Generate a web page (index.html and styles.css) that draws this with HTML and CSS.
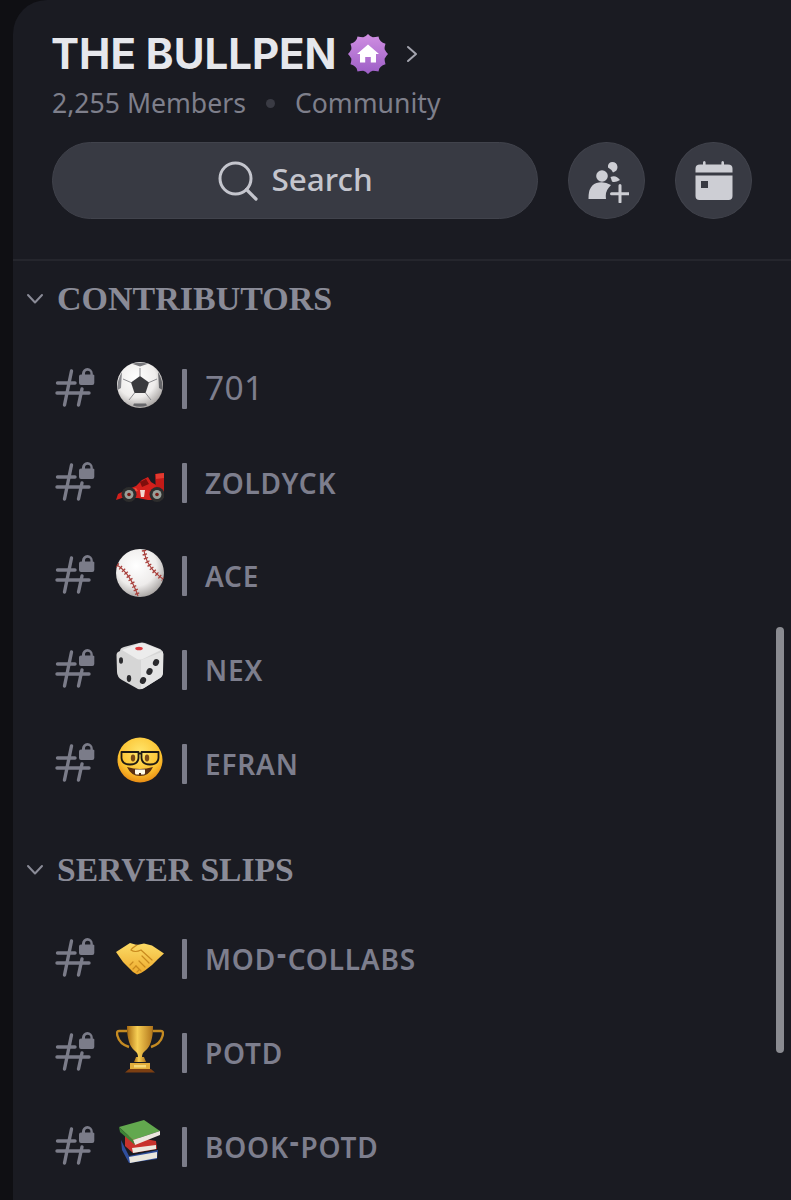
FILE: index.html
```html
<!DOCTYPE html>
<html lang="en">
<head>
    <meta charset="UTF-8">
    <title>The Bullpen</title>
    <meta name="viewport" content="width=device-width, initial-scale=1.0">
    <link rel="stylesheet" href="styles.css">
</head>
<body>
    <svg class="defs" width="0" height="0">
        <defs>
            <radialGradient id="ballGrad" cx="42%" cy="35%" r="70%">
                <stop offset="0" stop-color="#ffffff"/>
                <stop offset="0.6" stop-color="#eeeceb"/>
                <stop offset="1" stop-color="#a09c9a"/>
            </radialGradient>
            <radialGradient id="faceGrad" cx="50%" cy="32%" r="72%">
                <stop offset="0" stop-color="#ffe56c"/>
                <stop offset="0.65" stop-color="#fcc22f"/>
                <stop offset="1" stop-color="#e4820f"/>
            </radialGradient>
            <linearGradient id="goldGrad" x1="0" x2="1" y1="0" y2="0">
                <stop offset="0" stop-color="#a86a10"/>
                <stop offset="0.4" stop-color="#f7cf55"/>
                <stop offset="1" stop-color="#b0741a"/>
            </linearGradient>
            <linearGradient id="handGrad" x1="0" x2="0" y1="0" y2="1">
                <stop offset="0" stop-color="#fcdb66"/>
                <stop offset="1" stop-color="#eeaa2c"/>
            </linearGradient>
            <linearGradient id="badgeGrad" x1="0" x2="0" y1="0" y2="1">
                <stop offset="0" stop-color="#d08fe2"/>
                <stop offset="1" stop-color="#9c5ec6"/>
            </linearGradient>

            <symbol id="hashLock" viewBox="0 0 40 40">
                <g fill="none" stroke="#7b7c89" stroke-width="3.4" stroke-linecap="round">
                    <path d="M16.500 3 L9.500 37"/>
                    <path d="M27 21 L23.500 37"/>
                    <path d="M2.500 15 H20"/>
                    <path d="M2 25 H34"/>
                </g>
                <path d="M24 8.500 a2 2 0 0 1 2-2 h1 v-1 a5.400 5.400 0 0 1 10.800 0 v1 h0 a1.500 1.500 0 0 1 1.500 2 v6.500 a2 2 0 0 1-2 2 H26 a2 2 0 0 1-2-2 z M30 6.500 h5.400 v-1 a2.700 2.700 0 0 0-5.400 0 z" fill="#7b7c89" fill-rule="evenodd"/>
            </symbol>

            <symbol id="soccer" viewBox="0 0 48 48">
                <circle cx="24" cy="24" r="23" fill="url(#ballGrad)"/>
                <path d="M24 15 L33 21.500 L29.500 32 H18.500 L15 21.500 Z" fill="#3a3a3e"/>
                <g stroke="#8a8a8e" stroke-width="1">
                    <path d="M24 15 V7 M33 21.500 L41 18 M15 21.500 L7 18 M29.500 32 L35 39 M18.500 32 L13 39"/>
                </g>
                <path d="M16 2.800 Q24 0.500 32 2.800 L24 5.500 Z" fill="#77777b"/>
                <path d="M42 11 Q47 19 46.500 29 L43 27 L42.500 18 Z" fill="#66666a"/>
                <path d="M6 11 Q1 19 1.500 29 L5 27 L5.500 18 Z" fill="#85858a"/>
                <path d="M17 44.500 Q24 47 31 44.500 L30 42.500 H18 Z" fill="#66666a"/>
            </symbol>

            <symbol id="racecar" viewBox="0 0 48 48">
                <path d="M0 45 L2 39 L10 35 L20 31 L26 25 L32 22 L35 27 L40 30 V45 H32 L22 43 H6 Z" fill="#d3201c"/>
                <path d="M39 19 L48 18 V37 L40 36 Z" fill="#c21a17"/>
                <path d="M40 19 L48 18 V23 L40 24 Z" fill="#e23a30"/>
                <path d="M24 27 L30 24 L33 29 L26 32 Z" fill="#7f0e0c"/>
                <path d="M8 36 L20 33 L22 36 L10 39 Z" fill="#f04a3a"/>
                <path d="M24 35 h5 l-1 7 h-3 z" fill="#f2d8d0"/>
                <circle cx="13" cy="39.500" r="7.500" fill="#2d2d2d"/>
                <circle cx="13" cy="39.500" r="4.500" fill="#98a09a"/>
                <circle cx="13" cy="39.500" r="1.800" fill="#7a1a14"/>
                <circle cx="41" cy="39.500" r="7.500" fill="#2d2d2d"/>
                <circle cx="41" cy="39.500" r="4.500" fill="#98a09a"/>
                <circle cx="41" cy="39.500" r="1.800" fill="#7a1a14"/>
            </symbol>

            <symbol id="baseball" viewBox="0 0 48 48">
                <circle cx="24" cy="24" r="24" fill="url(#ballGrad)"/>
                <g fill="none" stroke="#a9403c">
                    <path d="M1 16 Q14 24 22 47" stroke-width="1.200"/>
                    <path d="M28 1 Q30 18 47 30" stroke-width="1.200"/>
                    <path d="M1 16 Q14 24 22 47" stroke-width="4.500" stroke-dasharray="1.300 2.600"/>
                    <path d="M28 1 Q30 18 47 30" stroke-width="4.500" stroke-dasharray="1.300 2.600"/>
                </g>
            </symbol>

            <symbol id="die" viewBox="0 0 48 48">
                <path d="M4 9 Q4 6 8 5 L23 1 Q26 0 29 1 L44 7 Q47 8.500 47.500 12 L47 30 Q47 34 44 36 L28 46 Q25 48 22 47 L6 38 Q1 35 1 30 L0.500 13 Q0.500 10 4 9 Z" fill="#d6d6d6"/>
                <path d="M6 8 L23 1.500 Q26 0.500 28 1.500 L45 8 L27 17 Q24 18 21 17 Z" fill="#ececec"/>
                <path d="M25 18 L47 9.500 L47 30 Q47 34 44 36 L28 46 Q25.500 47.500 25 46 Z" fill="#e4e4e4"/>
                <ellipse cx="23" cy="6.500" rx="3.800" ry="1.800" fill="#de3b3f"/>
                <ellipse cx="5" cy="18.500" rx="2" ry="3.200" fill="#2b2b2e"/>
                <ellipse cx="13" cy="36.500" rx="2.200" ry="3.400" fill="#2b2b2e"/>
                <ellipse cx="40" cy="20.500" rx="3" ry="3.600" fill="#2b2b2e" transform="rotate(25 40 20.500)"/>
                <ellipse cx="33.500" cy="29.500" rx="3" ry="3.600" fill="#2b2b2e" transform="rotate(25 33.500 29.500)"/>
                <ellipse cx="27" cy="38.500" rx="3" ry="3.600" fill="#2b2b2e" transform="rotate(25 27 38.500)"/>
            </symbol>

            <symbol id="nerd" viewBox="0 0 48 48">
                <circle cx="24" cy="24" r="22.500" fill="url(#faceGrad)"/>
                <ellipse cx="17" cy="22" rx="2.200" ry="3.400" fill="#7a4a16"/>
                <ellipse cx="31" cy="22" rx="2.200" ry="3.400" fill="#7a4a16"/>
                <g fill="none" stroke="#1e1a14" stroke-width="1.800">
                    <path d="M5.500 16 H22.500 V22 Q22 28.500 14 28.500 Q6 28.500 5.500 22 Z" stroke-linejoin="round"/>
                    <path d="M25.500 16 H42.500 V22 Q42 28.500 34 28.500 Q26 28.500 25.500 22 Z" stroke-linejoin="round"/>
                    <path d="M22.500 17.500 H25.500"/>
                </g>
                <path d="M11 31 Q24 35 37 31 Q33 40 24 40 Q15 40 11 31 Z" fill="#5a2f10"/>
                <path d="M19 33.500 H29 V37 q0 1.500-1.500 1.500 H25 V37 h-2 v1.500 h-2.500 q-1.500 0-1.500-1.500 z" fill="#fffbe8"/>
            </symbol>

            <symbol id="handshake" viewBox="0 0 48 48">
                <path d="M0 20 L14 11 L21 13 L28 11.500 L36 13.500 L48 21.500 L42 27 L36 33 L29 38.500 L25 41 L21 42.500 L17 40 L14 37 L7 30 Z" fill="url(#handGrad)"/>
                <g fill="none" stroke="#c98a1e" stroke-width="1.200" stroke-linecap="round">
                    <path d="M21 13 Q16 16 15 18 Q19 21 25 18 L36 28"/>
                    <path d="M33 31 L26 24"/>
                    <path d="M29 35 L23 29"/>
                    <path d="M25 39 L20 34"/>
                    <path d="M14 33 L17 30 M17 37 L20 34 M21 40 L23 38"/>
                </g>
            </symbol>

            <symbol id="trophy" viewBox="0 0 48 48">
                <g fill="none" stroke="#c48a22" stroke-width="2.400">
                    <path d="M11 6 H3 Q0 6 1.500 11 Q3.500 19 13 22"/>
                    <path d="M37 6 H45 Q48 6 46.500 11 Q44.500 19 35 22"/>
                </g>
                <path d="M11 1 H37 Q37 20 29 26 Q26 28 26 32 H22 Q22 28 19 26 Q11 20 11 1 Z" fill="url(#goldGrad)"/>
                <path d="M20 32 H28 L30 37 H18 Z" fill="url(#goldGrad)"/>
                <path d="M14 38 H34 V44 H14 Z" fill="#e2ae3c"/>
                <path d="M18 40 H30 V42.500 H18 Z" fill="#f7d977"/>
                <path d="M9 47.500 L13 44 H35 L39 47.500 Z" fill="#7c3f12"/>
            </symbol>

            <symbol id="books" viewBox="0 0 48 48">
                <g transform="translate(3 1)">
                    <path d="M2 20 L3 30 L10 43 L38 39 L39 30 L10 36 Z" fill="#2f4e9c"/>
                    <path d="M10 37 L38 32 L38 38 L11 43 Z" fill="#e9e6dd"/>
                    <path d="M6 15 L6 26 L14 33 L38 29 L37 21 Z" fill="#c8322c"/>
                    <path d="M13 28 L37 25 L37 29 L14 33 Z" fill="#ece8df"/>
                    <path d="M0 7 L25 0 L41 11 L14 20 Z" fill="#62a84e"/>
                    <path d="M14 20 L41 11 L41 15 L16 25 Z" fill="#ece8df"/>
                    <path d="M0 7 L14 20 L16 25 L1 12 Z" fill="#3f8537"/>
                </g>
            </symbol>

            <symbol id="chevronDown" viewBox="0 0 18 12">
                <path d="M2 2 L9 9.500 L16 2" fill="none" stroke="#8a8b97" stroke-width="2" stroke-linecap="round" stroke-linejoin="round"/>
            </symbol>
        </defs>
    </svg>

    <div class="panel">
        <header class="top">
            <div class="title-row">
                <h1>THE BULLPEN</h1>
                <svg class="badge" viewBox="0 0 40 40">
                    <path d="M20 0 Q22.500 3 24.800 3.200 Q27.500 3 30.500 2.500 Q31 6 32.800 7.300 Q34.500 9 37.500 9.700 Q36.500 12.500 36.600 15.200 Q38 18 40 20 Q38 22 36.600 24.800 Q36.500 27.500 37.500 30.300 Q34.500 31 32.800 32.700 Q31 34 30.500 37.500 Q27.500 37 24.800 36.800 Q22.500 37 20 40 Q17.500 37 15.200 36.800 Q12.500 37 9.500 37.500 Q9 34 7.200 32.700 Q5.500 31 2.500 30.300 Q3.500 27.500 3.400 24.800 Q2 22 0 20 Q2 18 3.400 15.200 Q3.500 12.500 2.500 9.700 Q5.500 9 7.200 7.300 Q9 6 9.500 2.500 Q12.500 3 15.200 3.200 Q17.500 3 20 0 Z" fill="url(#badgeGrad)"/>
                    <path d="M20 10.500 L31 20 H28 V28.500 H22.800 V23 H17.200 V28.500 H12 V20 H9 Z" fill="#fff"/>
                </svg>
                <svg class="title-chevron" viewBox="0 0 12 18">
                    <path d="M2 2 L10 9 L2 16" fill="none" stroke="#a4a5af" stroke-width="2" stroke-linecap="round" stroke-linejoin="round"/>
                </svg>
            </div>
            <div class="meta">
                <span>2,255 Members</span>
                <i class="dot"></i>
                <span>Community</span>
            </div>
            <div class="actions">
                <div class="search">
                    <svg class="search-icon" viewBox="0 0 40 40">
                        <circle cx="17.500" cy="17.500" r="15.500" fill="none" stroke="#c4c5cd" stroke-width="3"/>
                        <path d="M28.500 28.500 L38 38" stroke="#c4c5cd" stroke-width="3.200" stroke-linecap="round"/>
                    </svg>
                    <span class="search-label">Search</span>
                </div>
                <button class="round" type="button" aria-label="Invite">
                    <svg viewBox="0 0 44 44">
                        <circle cx="17" cy="17" r="5.800" fill="#cdced4"/>
                        <path d="M3.500 40 Q3 25 14 23.500 Q20 22.500 26 26 L23.500 29 Q20 33 21 40 Z" fill="#cdced4"/>
                        <path d="M27 3 Q32 3 32.500 8 Q32.500 12 28 13.500 Q26 10 23 8.500 Q22.500 3.500 27 3 Z" fill="#cdced4"/>
                        <path d="M25.500 18 Q31 15.500 35 21 Q30 24 27 22.500 Z" fill="#cdced4"/>
                        <path d="M35 26.500 V43 M26.500 34.700 H43.500" stroke="#cdced4" stroke-width="3" stroke-linecap="round"/>
                    </svg>
                </button>
                <button class="round" type="button" aria-label="Events">
                    <svg viewBox="0 0 38 40">
                        <path d="M8 3.500 V1.500 Q8 0 9.300 0 T10.600 1.500 V3.500 H26.400 V1.500 Q26.400 0 27.700 0 T29 1.500 V3.500 H33 Q37.500 3.500 37.500 7.500 V11.500 H0.500 V7.500 Q0.500 3.500 5 3.500 Z" fill="#cdced4"/>
                        <path d="M0.500 14.500 H37.500 V35 Q37.500 39 33.500 39 H4.500 Q0.500 39 0.500 35 Z M6 20 V27 H13 V20 Z" fill="#cdced4" fill-rule="evenodd"/>
                    </svg>
                </button>
            </div>
        </header>

        <section class="group">
            <h2 class="group-head">
                <svg class="chevron"><use href="#chevronDown"/></svg>
                <span>CONTRIBUTORS</span>
            </h2>
            <div class="channel">
                <svg class="hash"><use href="#hashLock"/></svg>
                <svg class="emoji"><use href="#soccer"/></svg>
                <i class="bar"></i>
                <span class="name name-plain">701</span>
            </div>
            <div class="channel">
                <svg class="hash"><use href="#hashLock"/></svg>
                <svg class="emoji"><use href="#racecar"/></svg>
                <i class="bar"></i>
                <span class="name">ZOLDYCK</span>
            </div>
            <div class="channel">
                <svg class="hash"><use href="#hashLock"/></svg>
                <svg class="emoji"><use href="#baseball"/></svg>
                <i class="bar"></i>
                <span class="name">ACE</span>
            </div>
            <div class="channel">
                <svg class="hash"><use href="#hashLock"/></svg>
                <svg class="emoji"><use href="#die"/></svg>
                <i class="bar"></i>
                <span class="name">NEX</span>
            </div>
            <div class="channel">
                <svg class="hash"><use href="#hashLock"/></svg>
                <svg class="emoji"><use href="#nerd"/></svg>
                <i class="bar"></i>
                <span class="name">EFRAN</span>
            </div>
        </section>

        <section class="group group-next">
            <h2 class="group-head">
                <svg class="chevron"><use href="#chevronDown"/></svg>
                <span>SERVER SLIPS</span>
            </h2>
            <div class="channel">
                <svg class="hash"><use href="#hashLock"/></svg>
                <svg class="emoji"><use href="#handshake"/></svg>
                <i class="bar"></i>
                <span class="name">MOD<span class="dash">-</span>COLLABS</span>
            </div>
            <div class="channel">
                <svg class="hash"><use href="#hashLock"/></svg>
                <svg class="emoji"><use href="#trophy"/></svg>
                <i class="bar"></i>
                <span class="name">POTD</span>
            </div>
            <div class="channel">
                <svg class="hash"><use href="#hashLock"/></svg>
                <svg class="emoji"><use href="#books"/></svg>
                <i class="bar"></i>
                <span class="name">BOOK<span class="dash">-</span>POTD</span>
            </div>
        </section>

        <div class="scrollbar"></div>
    </div>
</body>
</html>
```

FILE: styles.css
```css
html, body {
    margin: 0;
    padding: 0;
    height: 1200px;
    overflow: hidden;
}

body {
    font-family: "Noto Sans", sans-serif;
    background-color: #0f0f13;
}

.defs {
    display: block;
    height: 0;
}

.panel {
    position: relative;
    height: 1200px;
    margin-left: 13px;
    background: #1a1b22;
    border-top-left-radius: 34px;
    overflow: hidden;
}

.top {
    padding: 32px 39px 40px;
    border-bottom: 2px solid #25262d;
}

.title-row {
    display: flex;
    align-items: center;
    height: 44px;
}

h1 {
    margin: 0 0 0 -1px;
    font-family: Inter, sans-serif;
    font-size: 42px;
    font-weight: 700;
    line-height: 44px;
    color: #e6e7ec;
    white-space: nowrap;
}

.badge {
    width: 40px;
    height: 40px;
    margin-left: 11px;
}

.title-chevron {
    width: 12px;
    height: 18px;
    margin-left: 18px;
}

.meta {
    display: flex;
    align-items: center;
    height: 34px;
    margin-top: 10px;
    padding-bottom: 1px;
    font-size: 26.6px;
    color: #7e7f8b;
    white-space: nowrap;
}

.dot {
    width: 9px;
    height: 9px;
    margin: 0 20px;
    background: #3a3b44;
    border-radius: 50%;
}

.actions {
    display: flex;
    align-items: center;
    margin-top: 21px;
}

.search {
    display: flex;
    align-items: center;
    justify-content: center;
    gap: 13px;
    box-sizing: border-box;
    width: 487px;
    height: 77px;
    padding-left: 1px;
    background: #383a43;
    border: 1px solid #41434c;
    border-radius: 39px;
    font-size: 31.5px;
    font-weight: 500;
    color: #c4c5cd;
}

.search-label {
    padding-bottom: 4px;
}

.search-icon {
    width: 40px;
    height: 40px;
}

.round {
    display: flex;
    align-items: center;
    justify-content: center;
    box-sizing: border-box;
    width: 77px;
    height: 77px;
    margin-left: 30px;
    padding: 0;
    background: #383a43;
    border: 1px solid #41434c;
    border-radius: 50%;
}

.round svg {
    flex: none;
    width: 44px;
    height: 44px;
}

.round + .round svg {
    width: 38px;
    height: 40px;
}

.group-head {
    display: flex;
    align-items: center;
    height: 40px;
    margin: 18px 0 23px;
    font-family: "Liberation Serif", serif;
    font-size: 34px;
    font-weight: 700;
    color: #8a8b97;
    white-space: nowrap;
}

.group-next {
    margin-top: 40px;
}

.group-next .group-head {
    margin: 0 0 22px;
    font-size: 33.6px;
}

.chevron {
    width: 18px;
    height: 12px;
    margin: 0 13px;
}

.channel {
    display: flex;
    align-items: center;
    height: 93.7px;
    padding-left: 42px;
}

.hash {
    width: 40px;
    height: 40px;
    margin-bottom: 2px;
}

.emoji {
    width: 48px;
    height: 48px;
    margin: 0 0 7px 21px;
}

.bar {
    width: 5px;
    height: 40px;
    margin-left: 18px;
    background: #7b7c89;
    border-radius: 1px;
}

.name {
    margin-left: 18px;
    font-size: 28px;
    font-weight: 600;
    line-height: 40px;
    letter-spacing: 0.8px;
    color: #7d7e8d;
    white-space: nowrap;
}

.name-plain {
    padding-bottom: 3px;
    font-size: 33.5px;
    font-weight: 400;
    letter-spacing: 0.3px;
}

.dash {
    padding: 0 1px;
    font-weight: 800;
    line-height: 0;
    vertical-align: 6px;
}

.scrollbar {
    position: absolute;
    top: 627px;
    left: 763px;
    width: 8px;
    height: 426px;
    background: #8a8b91;
    border-radius: 4px;
}
```
